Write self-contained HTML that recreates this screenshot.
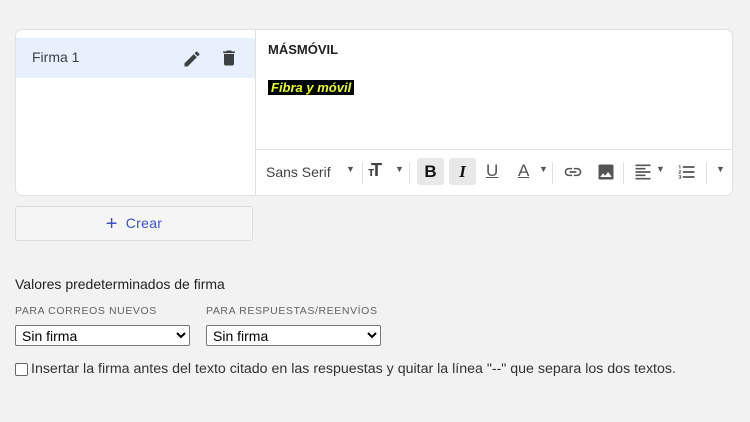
<!DOCTYPE html>
<html><head><meta charset="utf-8"><style>
body{margin:0;width:750px;height:422px;background:#f2f2f2;font-family:"Liberation Sans",sans-serif;position:relative;overflow:hidden;color:#202124}
.a{position:absolute}
.card{left:15px;top:29px;width:718px;height:167px;background:#fff;border:1px solid #e0e0e0;border-radius:7px;box-sizing:border-box;overflow:hidden}
.sel{left:0;top:8px;width:239px;height:40px;background:#e8f0fe}
.div{left:239px;top:0;width:1px;height:167px;background:#e0e0e0}
.tb{left:240px;top:119px;width:477px;height:1px;background:#e0e0e0}
.t{font-size:14px;color:#444}
.sep{width:1px;height:22px;background:#e0e0e0;top:132px}
.btn{left:15px;top:206px;width:238px;height:35px;border:1px solid #dadce0;border-radius:3px;box-sizing:border-box;background:#f5f5f5}
select{position:absolute;height:21px;font-family:"Liberation Sans",sans-serif;font-size:14px;border:1px solid #777;background:#fff;border-radius:2px;padding:0 2px;color:#000}
.lbl{font-size:10.5px;letter-spacing:.6px;color:#5f6368}
</style></head><body>
<div class="a card">
 <div class="a sel"></div>
 <div class="a t" style="left:16px;top:19px;color:#3c4043">Firma 1</div>
 <svg class="a" style="left:166px;top:19px" width="20" height="20" viewBox="0 0 24 24"><path fill="#3c4043" d="M3 17.25V21h3.75L17.8 9.94l-3.75-3.75L3 17.25zM20.7 7.04a1 1 0 0 0 0-1.41l-2.34-2.34a1 1 0 0 0-1.41 0l-1.83 1.83 3.75 3.75 1.83-1.83z"/></svg>
 <svg class="a" style="left:203px;top:18px" width="20" height="20" viewBox="0 0 24 24"><path fill="#3c4043" d="M6 19c0 1.1.9 2 2 2h8c1.1 0 2-.9 2-2V7H6v12zM19 4h-3.5l-1-1h-5l-1 1H5v2h14V4z"/></svg>
 <div class="a div"></div>
 <div class="a" style="left:252px;top:12px;font-size:13px;font-weight:bold;color:#222">MÁSMÓVIL</div>
 <div class="a" style="left:252px;top:50px;background:#000;color:#e8ff1a;font-size:13px;font-weight:bold;font-style:italic;padding:0 3px;line-height:15px">Fibra y móvil</div>
 <div class="a tb"></div>
 <div class="a t" style="left:250px;top:134px">Sans Serif</div>
 <div class="a" style="left:330px;top:134px;font-size:9px;color:#555">▼</div>
 <div class="a sep" style="left:346px;top:132px"></div>
 <div class="a" style="left:355px;top:130px;font-size:18px;font-weight:bold;color:#444">T<span style="font-size:13px;position:absolute;left:-3px;top:4px">т</span></div>
 <div class="a" style="left:379px;top:134px;font-size:9px;color:#555">▼</div>
 <div class="a sep" style="left:393px"></div>
 <div class="a" style="left:401px;top:128px;width:27px;height:27px;background:#e8e8e8;border-radius:3px;text-align:center;font:bold 17px/27px 'Liberation Sans',sans-serif;color:#111">B</div>
 <div class="a" style="left:433px;top:128px;width:27px;height:27px;background:#e8e8e8;border-radius:3px;text-align:center;font:italic bold 17px/27px 'Liberation Serif',serif;color:#111">I</div>
 <div class="a" style="left:470px;top:131px;font-size:17px;color:#555;text-decoration:underline">U</div>
 <div class="a" style="left:502px;top:131px;font-size:17px;color:#555;text-decoration:underline">A</div>
 <div class="a" style="left:523px;top:134px;font-size:9px;color:#555">▼</div>
 <div class="a sep" style="left:536px"></div>
 <svg class="a" style="left:547px;top:132px" width="20" height="20" viewBox="0 0 24 24"><path fill="#555" d="M3.9 12c0-1.7 1.4-3.1 3.1-3.1h4V7H7a5 5 0 0 0 0 10h4v-1.9H7c-1.7 0-3.1-1.4-3.1-3.1zM8 13h8v-2H8v2zm9-6h-4v1.9h4c1.7 0 3.1 1.4 3.1 3.1s-1.4 3.1-3.1 3.1h-4V17h4a5 5 0 0 0 0-10z"/></svg>
 <svg class="a" style="left:580px;top:132px" width="20" height="20" viewBox="0 0 24 24"><path fill="#555" d="M21 19V5a2 2 0 0 0-2-2H5a2 2 0 0 0-2 2v14a2 2 0 0 0 2 2h14a2 2 0 0 0 2-2zM8.5 13.5l2.5 3 3.5-4.5 4.5 6H5l3.5-4.5z"/></svg>
 <div class="a sep" style="left:607px"></div>
 <svg class="a" style="left:617px;top:132px" width="20" height="20" viewBox="0 0 24 24"><path fill="#555" d="M15 15H3v2h12v-2zm0-8H3v2h12V7zM3 13h18v-2H3v2zm0 8h18v-2H3v2zM3 3v2h18V3H3z"/></svg>
 <div class="a" style="left:640px;top:134px;font-size:9px;color:#555">▼</div>
 <svg class="a" style="left:661px;top:132px" width="20" height="20" viewBox="0 0 24 24"><path fill="#555" d="M2 17h2v.5H3v1h1v.5H2v1h3v-4H2v1zm1-9h1V4H2v1h1v3zm-1 3h1.8L2 13.1v.9h3v-1H3.2L5 10.9V10H2v1zm5-6v2h14V5H7zm0 14h14v-2H7v2zm0-6h14v-2H7v2z"/></svg>
 <div class="a sep" style="left:690px"></div>
 <div class="a" style="left:700px;top:134px;font-size:9px;color:#555">▼</div>
</div>
<div class="a btn"><div style="text-align:center;line-height:33px;font-size:14px;color:#3c4fc4;letter-spacing:.3px"><span style="font-size:20px;vertical-align:-2px;margin-right:8px">+</span>Crear</div></div>
<div class="a" style="left:15px;top:276px;font-size:14px;color:#222">Valores predeterminados de firma</div>
<div class="a lbl" style="left:15px;top:305px">PARA CORREOS NUEVOS</div>
<div class="a lbl" style="left:206px;top:305px">PARA RESPUESTAS/REENVÍOS</div>
<select style="left:15px;top:325px;width:175px"><option>Sin firma</option></select>
<select style="left:206px;top:325px;width:175px"><option>Sin firma</option></select>
<div class="a" style="left:15px;top:363px;width:11px;height:11px;border:1px solid #666;border-radius:2px;background:#fff"></div>
<div class="a" style="left:31px;top:361px;font-size:14.2px;color:#333">Insertar la firma antes del texto citado en las respuestas y quitar la línea "--" que separa los dos textos.</div>
</body></html>
